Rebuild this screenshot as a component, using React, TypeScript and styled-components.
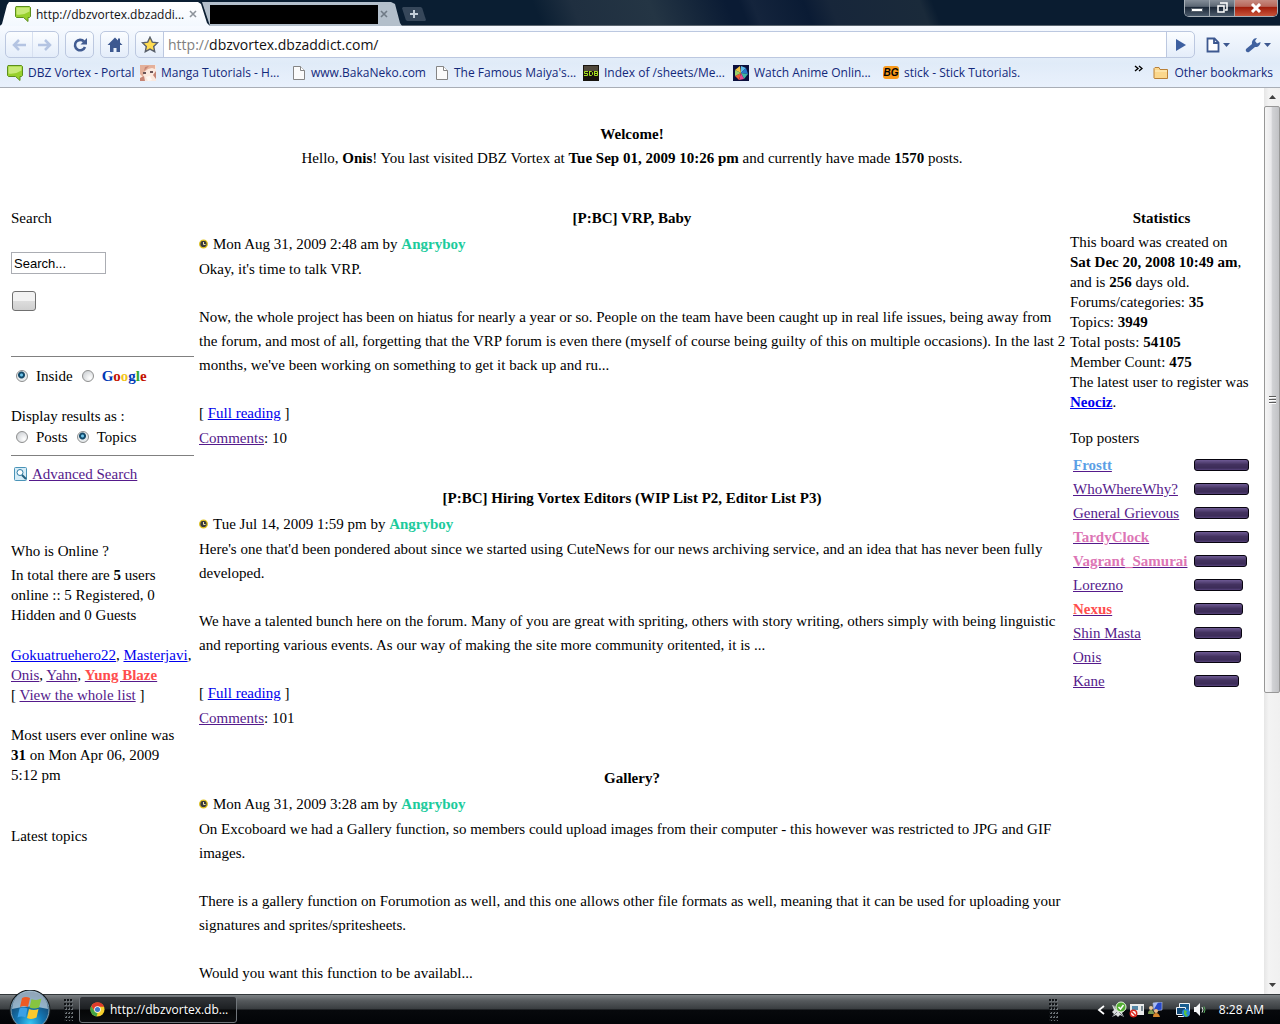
import React, { useState } from "react";
import styled, { createGlobalStyle, css } from "styled-components";

const serif = '"Liberation Serif", "Times New Roman", serif';
const ui = '"Open Sans", "Noto Sans", sans-serif';

const GlobalStyle = createGlobalStyle`
  * { box-sizing: border-box; }
  body { margin: 0; background: #fff; }
  button { padding: 0; border: 0; background: none; font: inherit; }
  svg { display: block; flex: none; }
`;

/* ---------- window frame ---------- */

const Desktop = styled.div`
  display: flex;
  flex-direction: column;
  height: 100vh;
  overflow: hidden;
  font-family: ${ui};
  font-size: 12px;
`;

const TitleBar = styled.header`
  display: flex;
  align-items: flex-end;
  height: 26px;
  flex: none;
  border-bottom: 1px solid #5b6670;
  background: linear-gradient(
    68deg,
    #0a1e32 42%,
    #1f2f40 45%,
    #243544 51%,
    #0a1b34 57%,
    #0a1b34 58%,
    #14243c 59%,
    #0a1b34 63%,
    #17263a 65%,
    #1a2a3a 72%,
    #0a1c30 73%
  );
`;

const Tab = styled.div<{ $active?: boolean }>`
  display: flex;
  align-items: center;
  gap: ${(p) => (p.$active ? 5 : 1)}px;
  width: ${(p) => (p.$active ? 210 : 200)}px;
  height: 24px;
  padding: ${(p) => (p.$active ? "0 16px 0 15px" : "0 13px 0 8px")};
  margin-bottom: -1px;
  margin-left: ${(p) => (p.$active ? 0 : -8)}px;
  color: #111;
  background: ${(p) => (p.$active ? "linear-gradient(#fff, #f3f8fe)" : "#b3bfcb")};
  clip-path: ${(p) =>
    p.$active
      ? "polygon(0 100%, 2px 92%, 7px 12%, 9px 0, 198px 0, 201px 8%, 207px 88%, 210px 100%)"
      : "polygon(8px 100%, 0 0, 189px 0, 193px 8%, 198px 88%, 200px 100%)"};
`;

const TabTitle = styled.span`
  flex: 1;
  white-space: nowrap;
`;

const Redacted = styled.span`
  flex: 1;
  height: 19px;
  background: #000;
`;

const TabClose = styled.button`
  display: grid;
  place-items: center;
  width: 10px;
  height: 12px;
`;

const NewTab = styled.button`
  display: grid;
  place-items: center;
  width: 24px;
  height: 14px;
  margin-bottom: 4px;
  background: #36475a;
  clip-path: polygon(0 8%, 5% 0, 78% 0, 84% 8%, 100% 92%, 96% 100%, 22% 100%, 16% 92%);
`;

const WindowButtons = styled.div`
  display: flex;
  align-self: flex-start;
  height: 17px;
  margin: 0 2px 0 auto;
  border: 1px solid #a8b0b8;
  border-top: 0;
  border-radius: 0 0 5px 5px;
  overflow: hidden;
`;

const WindowButton = styled.button<{ $close?: boolean }>`
  display: grid;
  place-items: center;
  width: ${(p) => (p.$close ? 42 : 25)}px;
  border-right: ${(p) => (p.$close ? 0 : 1)}px solid #a0a8b0;
  background: ${(p) =>
    p.$close
      ? "linear-gradient(#c68a80 0%, #b8675a 40%, #a01c0a 45%, #c8543a 100%)"
      : "linear-gradient(#848d98 0%, #5c6774 40%, #1a2636 45%, #4c5b6c 100%)"};
`;

const Toolbar = styled.div`
  display: flex;
  align-items: center;
  flex: none;
  height: 37px;
  padding: 0 5px;
  background: linear-gradient(#f7faff, #e0ebf8);
`;

const toolFrame = css`
  height: 27px;
  border: 1px solid #bcc8e0;
  border-radius: 5px;
  background: linear-gradient(#fbfdff, #e4edfa);
`;

const ToolGroup = styled.div`
  ${toolFrame}
  display: flex;
  width: 54px;
  margin-right: 6px;
`;

const HalfButton = styled.button`
  display: grid;
  place-items: center;
  flex: 1;
  & + & { border-left: 1px solid #d7e0f0; }
`;

const ToolButton = styled.button`
  ${toolFrame}
  display: grid;
  place-items: center;
  width: 29px;
  margin-right: 6px;
`;

const AddressBar = styled.form`
  ${toolFrame}
  display: flex;
  flex: 1;
  margin: 0 11px 0 0;
  overflow: hidden;
`;

const AddressButton = styled.button`
  display: grid;
  place-items: center;
  width: 27px;
  flex: none;
`;

const AddressField = styled.label`
  display: flex;
  flex: 1;
  align-items: center;
  padding: 0 4px;
  border: solid #bcc8e0;
  border-width: 0 1px;
  background: #fff;
  font-size: 14px;
  color: #808080;
`;

const AddressInput = styled.input`
  flex: 1;
  min-width: 0;
  padding: 0;
  border: 0;
  outline: 0;
  font: 14px ${ui};
  color: #111;
`;

const MenuButton = styled.button`
  display: flex;
  align-items: center;
  gap: 3px;
  width: 39px;
  & + & { width: 30px; }
`;

const Bookmarks = styled.nav`
  display: flex;
  align-items: center;
  flex: none;
  height: 25px;
  padding: 0 7px 5px;
  border-bottom: 1px solid #a9aeb6;
  background: linear-gradient(#e0ebf8, #e9f1fc);
`;

const BookmarkList = styled.div`
  display: grid;
  grid-template-columns: 133px 152px 143px 148px 150px 150px auto;
  margin-right: auto;
`;

const Bookmark = styled.a`
  display: flex;
  align-items: center;
  gap: 5px;
  color: #13297b;
  text-decoration: none;
  white-space: nowrap;
`;

const Overflow = styled.button`
  align-self: flex-start;
  margin: 2px 10px 0 0;
`;

/* ---------- page ---------- */

const Viewport = styled.div`
  display: flex;
  flex: 1;
  min-height: 0;
`;

const Page = styled.main`
  flex: 1;
  overflow: hidden;
  padding: 34px 11px 0;
  font: 15px/24px ${serif};
  color: #000;
`;

const Welcome = styled.section`
  margin-bottom: 36px;
  text-align: center;
`;

const Columns = styled.div`
  display: grid;
  grid-template-columns: 183px minmax(0, 1fr) 183px;
  gap: 5px;
`;

const Line = styled.p`
  margin: 0;
`;

const Heading = styled.h2<{ $plain?: boolean }>`
  margin: 0;
  font-size: 15px;
  font-weight: ${(p) => (p.$plain ? "normal" : "bold")};
  text-align: ${(p) => (p.$plain ? "left" : "center")};
`;

const Block = styled.p<{ $after?: number }>`
  margin: 0 0 ${(p) => p.$after ?? 20}px;
  line-height: 20px;
  white-space: nowrap;
  ${Heading} + & { margin-top: 2px; }
`;

const Link = styled.a<{ $seen?: boolean }>`
  color: ${(p) => (p.$seen ? "#551a8b" : "#0000ee")};
`;

const Ranked = styled.b<{ $color: string }>`
  color: ${(p) => p.$color};
`;

const SearchForm = styled.form`
  display: flex;
  flex-direction: column;
  align-items: flex-start;
  margin-bottom: 53px;
`;

const SearchInput = styled.input`
  width: 95px;
  height: 22px;
  margin: 22px 0 17px;
  padding: 0 2px;
  border: 1px solid #abadb3;
  font: 13px "Liberation Sans", Arial, sans-serif;
  color: #000;
`;

const SubmitButton = styled.button`
  width: 24px;
  height: 20px;
  margin: 0 1px 45px;
  border: 1px solid #707070;
  border-radius: 3px;
  background: linear-gradient(#f2f2f2 0 50%, #dddddd 50%, #cfcfcf);
`;

const Rule = styled.hr`
  width: 100%;
  margin: 0;
  border: 0;
  border-top: 1px solid #808080;
`;

const RadioRow = styled.div<{ $last?: boolean }>`
  display: flex;
  gap: 9px;
  margin: ${(p) => (p.$last ? "0 0 9px" : "7px 0 16px")};
  padding-left: 5px;
  line-height: ${(p) => (p.$last ? 18 : 24)}px;
`;

const RadioLabel = styled.label`
  display: flex;
  align-items: center;
  gap: 8px;
`;

const Radio = styled.input`
  appearance: none;
  width: 12px;
  height: 12px;
  margin: 0;
  border: 1px solid #8e8f8f;
  border-radius: 50%;
  background: radial-gradient(circle at 70% 70%, #fff, #c4c8cc);
  &:checked {
    background: radial-gradient(circle at 45% 40%, #6fc4ea 0 1px, #134a6b 2px 3px, #e6eaec 4px);
  }
`;

const Advanced = styled.a`
  display: flex;
  align-items: center;
  gap: 2px;
  padding: 6px 0 0 3px;
  color: #551a8b;
  white-space: pre;
`;

const Article = styled.article`
  margin-bottom: 36px;
`;

const Dateline = styled.div`
  display: flex;
  align-items: center;
  gap: 5px;
  margin: 2px 0 1px;
`;

const Body = styled.div`
  margin: 0 -3px 1px 0;
  p { margin: 0 0 24px; }
`;

const Posters = styled.table`
  width: 100%;
  margin-top: 3px;
  border-collapse: collapse;
  td { padding: 0; height: 24px; }
  td:first-child { padding-left: 3px; width: 124px; }
`;

const Bar = styled.div`
  height: 12px;
  border: 1px solid #08040f;
  border-radius: 3px;
  background: linear-gradient(#6e5a94, #43325f 45%, #3c2c58 80%, #57437c);
`;

/* ---------- scrollbar ---------- */

const Scrollbar = styled.div`
  display: flex;
  flex-direction: column;
  width: 16px;
  background: linear-gradient(90deg, #e6e6e6, #f3f3f3 30%, #f0f0f0);
`;

const ScrollArrow = styled.button`
  display: grid;
  place-items: center;
  height: 18px;
`;

const Thumb = styled.div`
  display: flex;
  flex: 588;
  flex-direction: column;
  align-items: center;
  justify-content: center;
  gap: 1px;
  border: 1px solid #979797;
  border-radius: 2px;
  background: linear-gradient(90deg, #f5f5f5, #e9e9eb 45%, #d2d3d6 50%, #c1c2c5);
`;

const Grip = styled.span`
  width: 7px;
  height: 2px;
  border-top: 1px solid #5a5a5a;
  background: #fff;
`;

const Track = styled.div`
  flex: 284;
`;

/* ---------- taskbar ---------- */

const Taskbar = styled.footer`
  display: flex;
  align-items: center;
  flex: none;
  height: 30px;
  padding: 0 16px 0 9px;
  border-top: 1px solid #33383b;
  background: linear-gradient(#7d8285 0, #55595c 20%, #393d40 48%, #07090c 52%, #020407);
  color: #fff;
`;

const StartButton = styled.button`
  align-self: flex-end;
  width: 42px;
  height: 34px;
  margin-right: 13px;
`;

const Dots = styled.span`
  width: 9px;
  height: 22px;
  background:
    radial-gradient(circle at 1px 1px, #101316 1px, transparent 1px) 0 0 / 3px 4px,
    radial-gradient(circle at 2px 2px, #6a7074 1px, transparent 1px) 0 0 / 3px 4px;
`;

const TaskButton = styled.button`
  display: flex;
  align-items: center;
  gap: 5px;
  width: 158px;
  height: 27px;
  margin: 0 auto 0 6px;
  padding-left: 10px;
  border: 1px solid #70757a;
  border-radius: 3px;
  background: linear-gradient(#33363a, #1c1f22 48%, #050607 52%, #0c0e10);
  color: #fff;
`;

const Tray = styled.div`
  display: flex;
  align-items: center;
  gap: 12px;
  margin-left: 39px;
`;

const TrayGroup = styled.div`
  display: flex;
  align-items: center;
  gap: 2px;
`;

const ShowHidden = styled.button`
  margin-right: 4px;
`;

/* ---------- icons ---------- */

const BubbleIcon = () => (
  <svg width="16" height="16" viewBox="0 0 16 16">
    <path d="M1 .5h13.500l1 1v9l-1 1h-1.500v4l-4.500-4H1.500l-1-1v-9z" fill="#98d02c" stroke="#5c8f1c" />
    <path d="M1.500 1.500h13v4q-6 4-13 3z" fill="#c8ea78" />
  </svg>
);

const PageIcon = () => (
  <svg width="14" height="16" viewBox="0 0 14 16">
    <path d="M1.500 1.500h7l4 4v9h-11z" fill="#fbfbfb" stroke="#858585" />
    <path d="M8.500 1.500v4h4" fill="#fff" stroke="#858585" />
  </svg>
);

const MangaIcon = () => (
  <svg width="16" height="16" viewBox="0 0 16 16">
    <path d="M0 0h16v16H0z" fill="#fbe9df" />
    <path d="M0 0h15v4L12 3 8 4 4 7 3 12 0 9z" fill="#e4b09a" />
    <path d="M3 7h3v2H3zM10 6h3v2h-3z" fill="#6b5558" />
    <path d="M5 2l4-1-5 5zM13 10l3-4v8zM0 13l4-2 1 5H0z" fill="#c58474" />
    <path d="M6 12l4-1 2 4-4 1z" fill="#fff8f3" />
  </svg>
);

const SdbIcon = () => (
  <svg width="16" height="16" viewBox="0 0 16 16">
    <path d="M0 0h16v16H0z" fill="#17140e" />
    <path d="M1 1h14v5H1z" fill="#4f483b" />
    <path d="M5 6.500H1.500v2H4.500v2H1M6.500 6v4.500h2l1-1v-2l-1-1h-2M11.500 6v4.500h3v-4h-3M11 8.500h3" fill="none" stroke="#a7e022" />
  </svg>
);

const PinwheelIcon = () => (
  <svg width="16" height="16" viewBox="0 0 16 16">
    <path d="M0 0h16v16H0z" fill="#0b0f3c" />
    <path d="M8 8L2 5l5-4z" fill="#f0c544" />
    <path d="M8 8V1l5 2z" fill="#59b8e8" />
    <path d="M8 8l5-5 2 6z" fill="#2879c9" />
    <path d="M8 8l7 1-4 5z" fill="#40b4a4" />
    <path d="M8 8l3 6-5 1z" fill="#e34890" />
    <path d="M8 8l-2 7-4-4z" fill="#ee5b35" />
    <path d="M8 8l-6 3V5z" fill="#9ed267" />
  </svg>
);

const BgBadge = styled.span`
  width: 16px;
  height: 13px;
  border-radius: 3px;
  background: #f89a1c;
  color: #000;
  font: italic bold 10px/13px "Liberation Sans", Arial, sans-serif;
  text-align: center;
`;

const FolderIcon = () => (
  <svg width="16" height="14" viewBox="0 0 16 14">
    <path d="M1 12V2.500L2 1.500h4l1 2h7.500V12.500H1.500z" fill="#fbd78c" stroke="#b98038" />
    <path d="M2 5h12" stroke="#fff0c4" />
  </svg>
);

const Arrow = ({ flip }: { flip?: boolean }) => (
  <svg width="16" height="14" viewBox="0 0 16 14">
    <path d={flip ? "M1 7h12M8 2l5 5-5 5" : "M15 7H3M8 2L3 7l5 5"} fill="none" stroke="#b4c4e2" strokeWidth="2.5" />
  </svg>
);

const ReloadIcon = () => (
  <svg width="16" height="16" viewBox="0 0 16 16">
    <path d="M12 4.500A5.200 5.200 0 1 0 13 10" fill="none" stroke="#425c92" strokeWidth="2.600" />
    <path d="M15 1v6.500H8.500z" fill="#425c92" />
  </svg>
);

const HomeIcon = () => (
  <svg width="16" height="16" viewBox="0 0 16 16">
    <path d="M8 0.500L0.500 8H3v7h3.500v-4h3v4H13V8h2.500L13 5.500V1.500h-2v2z" fill="#3d5890" />
  </svg>
);

const StarIcon = () => (
  <svg width="18" height="17" viewBox="0 0 18 17">
    <path d="M9 1.200l2.300 4.900 5.300.6-3.900 3.700 1 5.300L9 13.100l-4.700 2.600 1-5.300L1.400 6.700l5.300-.6z" fill="#ffdc51" stroke="#59606b" strokeWidth="1.400" />
  </svg>
);

const CaretIcon = () => (
  <svg width="7" height="4" viewBox="0 0 7 4">
    <path d="M0 0h7L3.500 4z" fill="#3d5890" />
  </svg>
);

const WrenchIcon = () => (
  <svg width="16" height="16" viewBox="0 0 16 16">
    <path d="M1 12l6-5c-.5-3 1.500-6 5-6l-2 3 2 2.500 3.500-1.500c0 3-2.500 5.500-5.500 5L4 15c-2 1-4-1-3-3z" fill="#41629f" />
  </svg>
);

const CrossIcon = ({ color = "#8d949b" }: { color?: string }) => (
  <svg width="8" height="8" viewBox="0 0 8 8">
    <path d="M1 1l6 6M7 1L1 7" stroke={color} strokeWidth="1.600" />
  </svg>
);

const ClockIcon = () => (
  <svg width="9" height="10" viewBox="0 0 9 10">
    <circle cx="4.500" cy="5" r="3.800" fill="#37393f" stroke="#e0c420" strokeWidth="1.300" />
    <path d="M4.500 3v2.500h2" fill="none" stroke="#f0e6a8" />
  </svg>
);

const MagnifierIcon = () => (
  <svg width="13" height="14" viewBox="0 0 13 14">
    <rect x=".5" y=".5" width="12" height="13" rx="1" fill="#d6ecf7" stroke="#4b94b8" />
    <circle cx="6" cy="5.500" r="3" fill="#fff" stroke="#2f7ca5" />
    <path d="M8 8l4 4" stroke="#24617f" strokeWidth="2" />
  </svg>
);

const StartOrb = () => (
  <svg width="42" height="34" viewBox="0 0 42 34">
    <defs>
      <radialGradient id="orb" cx=".5" cy=".85" r=".75">
        <stop offset="0" stopColor="#35c7f4" />
        <stop offset=".45" stopColor="#1477b4" />
        <stop offset="1" stopColor="#143a5e" />
      </radialGradient>
    </defs>
    <circle cx="21" cy="20" r="20.500" fill="#15191c" />
    <circle cx="21" cy="20" r="19" fill="url(#orb)" stroke="#7fa0b4" />
    <path d="M3 19a18 18 0 0 1 36 0q-18-5-36 0z" fill="#e4f0f8" opacity=".6" />
    <path d="M13 8q4-2 8 0l-2 9q-4-2-8 0z" fill="#ec5a24" />
    <path d="M22.500 9q5 2 10-.5l-2.500 9q-5 2-9.500 0z" fill="#87c440" />
    <path d="M10.500 18.500q4-2 8 0l-2 9q-4-2-8 0z" fill="#3ba0e6" />
    <path d="M20 19q5 2 9.500 0l-2 8.500q-5 2.500-9.500.5z" fill="#fcc92e" />
  </svg>
);

const ChromeIcon = () => (
  <svg width="15" height="15" viewBox="0 0 16 16">
    <circle cx="8" cy="8" r="7.500" fill="#f5cf2c" />
    <path d="M1.300 4.500A7.500 7.500 0 0 1 15 5H8L5 9.500z" fill="#de3b2b" />
    <path d="M1.300 4.500L5 10l3 2-1 3.500A7.500 7.500 0 0 1 1.300 4.500z" fill="#43a444" />
    <circle cx="8" cy="8" r="3.500" fill="#fff" />
    <circle cx="8" cy="8" r="2.700" fill="#3b79c9" />
  </svg>
);

const SafeIcon = () => (
  <svg width="16" height="17" viewBox="0 0 16 17">
    <path d="M1 4l3 1 2 3 3 1 4 1-2 2 2 4-4-2-2 2-2-2-4 2 2-3-2-2 2-2z" fill="#d9dcdc" />
    <path d="M2 4l5 6M2 15l4-4M12 15l-4-4" stroke="#7a8083" />
    <circle cx="10" cy="6" r="5" fill="#52ad32" stroke="#e5f5dd" />
    <path d="M7.500 6l2 2 3-4" fill="none" stroke="#fff" strokeWidth="1.500" />
  </svg>
);

const BlockedIcon = () => (
  <svg width="16" height="16" viewBox="0 0 16 16">
    <path d="M1 2h14v11H1z" fill="#e9eaea" />
    <path d="M3 4h6v4H3z" fill="#5589a8" />
    <path d="M12 4h2v5h-2z" fill="#7a8a92" />
    <circle cx="4.500" cy="11.500" r="3.200" fill="#fff" stroke="#d8281e" strokeWidth="1.500" />
    <path d="M2.500 9.500l4 4" stroke="#d8281e" strokeWidth="1.500" />
  </svg>
);

const PeopleIcon = () => (
  <svg width="16" height="16" viewBox="0 0 16 16">
    <path d="M6 1l9-1v8l-8 1z" fill="#2849c9" stroke="#c5cede" strokeWidth=".6" />
    <path d="M6 1l5-.5L7 7z" fill="#aabdf4" />
    <circle cx="4" cy="6" r="2" fill="#e8c79a" />
    <path d="M1 12q0-4 3-4t3 4z" fill="#7d9a51" />
    <circle cx="9" cy="9" r="2" fill="#f0bd85" />
    <path d="M6 15q0-4 3-4t4 4z" fill="#d7862c" />
  </svg>
);

const NetworkIcon = () => (
  <svg width="16" height="16" viewBox="0 0 16 16">
    <path d="M4.500 1.500h10v8h-10z" fill="#185d8f" stroke="#eef3f6" />
    <path d="M1.500 5.500h9v7h-9z" fill="#124a78" stroke="#eef3f6" />
    <path d="M3 14.500h6" stroke="#eef3f6" />
    <circle cx="11" cy="11" r="4" fill="#2787dc" />
    <path d="M9 8l3 1-1 3 2 1-2 2-2-3z" fill="#57c341" />
  </svg>
);

const SpeakerIcon = () => (
  <svg width="14" height="16" viewBox="0 0 14 16">
    <path d="M1 5h2l4-4v13l-4-4H1z" fill="#f3f5f6" />
    <path d="M9 5q2 3 0 5.500" fill="none" stroke="#e4eee4" />
    <path d="M11 4.500q2 3.500 0 6.500" fill="none" stroke="#55ae5a" />
  </svg>
);

/* ---------- data ---------- */

const bookmarks: [string, React.ReactNode][] = [
  ["DBZ Vortex - Portal", <BubbleIcon />],
  ["Manga Tutorials - H...", <MangaIcon />],
  ["www.BakaNeko.com", <PageIcon />],
  ["The Famous Maiya's...", <PageIcon />],
  ["Index of /sheets/Me...", <SdbIcon />],
  ["Watch Anime Onlin...", <PinwheelIcon />],
  ["stick - Stick Tutorials.", <BgBadge>BG</BgBadge>],
];

const articles = [
  {
    title: "[P:BC] VRP, Baby",
    date: "Mon Aug 31, 2009 2:48 am",
    comments: 10,
    body: [
      "Okay, it's time to talk VRP.",
      "Now, the whole project has been on hiatus for nearly a year or so. People on the team have been caught up in real life issues, being away from the forum, and most of all, forgetting that the VRP forum is even there (myself of course being guilty of this on multiple occasions). In the last 2 months, we've been working on something to get it back up and ru...",
    ],
  },
  {
    title: "[P:BC] Hiring Vortex Editors (WIP List P2, Editor List P3)",
    date: "Tue Jul 14, 2009 1:59 pm",
    comments: 101,
    body: [
      "Here's one that'd been pondered about since we started using CuteNews for our news archiving service, and an idea that has never been fully developed.",
      "We have a talented bunch here on the forum. Many of you are great with spriting, others with story writing, others simply with being linguistic and reporting various events. As our way of making the site more community oritented, it is ...",
    ],
  },
  {
    title: "Gallery?",
    date: "Mon Aug 31, 2009 3:28 am",
    comments: null,
    body: [
      "On Excoboard we had a Gallery function, so members could upload images from their computer - this however was restricted to JPG and GIF images.",
      "There is a gallery function on Forumotion as well, and this one allows other file formats as well, meaning that it can be used for uploading your signatures and sprites/spritesheets.",
      "Would you want this function to be availabl...",
    ],
  },
];

const posters: [string, number, string?][] = [
  ["Frostt", 55, "#5c9fe6"],
  ["WhoWhereWhy?", 55],
  ["General Grievous", 55],
  ["TardyClock", 55, "#dd75b5"],
  ["Vagrant_Samurai", 53, "#dd75b5"],
  ["Lorezno", 49],
  ["Nexus", 49, "#ff4d4d"],
  ["Shin Masta", 48],
  ["Onis", 47],
  ["Kane", 45],
];

const google: [string, string][] = [
  ["G", "#0039b6"],
  ["o", "#c41200"],
  ["o", "#f3c518"],
  ["g", "#0039b6"],
  ["l", "#30a72f"],
  ["e", "#c41200"],
];

/* ---------- sections ---------- */

function Browser() {
  return (
    <>
      <TitleBar>
        <Tab $active>
          <BubbleIcon />
          <TabTitle>http://dbzvortex.dbzaddi...</TabTitle>
          <TabClose aria-label="Close tab"><CrossIcon /></TabClose>
        </Tab>
        <Tab>
          <Redacted />
          <TabClose aria-label="Close tab"><CrossIcon color="#6f7a86" /></TabClose>
        </Tab>
        <NewTab aria-label="New tab">
          <svg width="8" height="8" viewBox="0 0 8 8"><path d="M4 0v8M0 4h8" stroke="#c4ced8" strokeWidth="2" /></svg>
        </NewTab>
        <WindowButtons>
          <WindowButton aria-label="Minimize">
            <svg width="12" height="12" viewBox="0 0 12 12"><path d="M.5 6.500h11v3H.5z" fill="#fff" stroke="#555f6a" /></svg>
          </WindowButton>
          <WindowButton aria-label="Restore">
            <svg width="12" height="12" viewBox="0 0 12 12">
              <path d="M4 1h7v7H9M2 4h6v6H2z" fill="none" stroke="#fff" strokeWidth="1.500" />
            </svg>
          </WindowButton>
          <WindowButton $close aria-label="Close">
            <svg width="12" height="10" viewBox="0 0 12 10"><path d="M2 1l8 8M10 1L2 9" stroke="#fff" strokeWidth="3" /></svg>
          </WindowButton>
        </WindowButtons>
      </TitleBar>
      <Toolbar>
        <ToolGroup>
          <HalfButton aria-label="Back"><Arrow /></HalfButton>
          <HalfButton aria-label="Forward"><Arrow flip /></HalfButton>
        </ToolGroup>
        <ToolButton aria-label="Reload"><ReloadIcon /></ToolButton>
        <ToolButton aria-label="Home"><HomeIcon /></ToolButton>
        <AddressBar onSubmit={(e) => e.preventDefault()}>
          <AddressButton type="button" aria-label="Bookmark this page"><StarIcon /></AddressButton>
          <AddressField>
            http://
            <AddressInput aria-label="Address" defaultValue="dbzvortex.dbzaddict.com/" />
          </AddressField>
          <AddressButton aria-label="Go">
            <svg width="10" height="12" viewBox="0 0 10 12"><path d="M0 0l10 6-10 6z" fill="#3d5fa0" /></svg>
          </AddressButton>
        </AddressBar>
        <MenuButton aria-label="Page menu">
          <svg width="14" height="16" viewBox="0 0 14 16">
            <path d="M1.500 1.500h7l4 4v9h-11zM8 1.500V6h4.500" fill="#fff" stroke="#3d5890" strokeWidth="1.800" />
          </svg>
          <CaretIcon />
        </MenuButton>
        <MenuButton aria-label="Tools menu"><WrenchIcon /><CaretIcon /></MenuButton>
      </Toolbar>
      <Bookmarks>
        <BookmarkList>
          {bookmarks.map(([name, icon]) => (
            <Bookmark href="#" key={name}>{icon}{name}</Bookmark>
          ))}
        </BookmarkList>
        <Overflow aria-label="More bookmarks">
          <svg width="9" height="7" viewBox="0 0 9 7"><path d="M1 1l3 2.500L1 6M5 1l3 2.500L5 6" fill="none" stroke="#000" strokeWidth="1.400" /></svg>
        </Overflow>
        <Bookmark href="#"><FolderIcon />Other bookmarks</Bookmark>
      </Bookmarks>
    </>
  );
}

function LeftColumn() {
  const [query, setQuery] = useState("Search...");
  return (
    <aside>
      <Heading $plain>Search</Heading>
      <SearchForm onSubmit={(e) => e.preventDefault()}>
        <SearchInput aria-label="Search" value={query} onChange={(e) => setQuery(e.target.value)} />
        <SubmitButton aria-label="Submit search" />
        <Rule />
        <RadioRow>
          <RadioLabel><Radio type="radio" name="where" defaultChecked />Inside</RadioLabel>
          <RadioLabel>
            <Radio type="radio" name="where" />
            <span>{google.map(([letter, color], i) => <Ranked key={i} $color={color}>{letter}</Ranked>)}</span>
          </RadioLabel>
        </RadioRow>
        <Line>Display results as :</Line>
        <RadioRow $last>
          <RadioLabel><Radio type="radio" name="kind" />Posts</RadioLabel>
          <RadioLabel><Radio type="radio" name="kind" defaultChecked />Topics</RadioLabel>
        </RadioRow>
        <Rule />
        <Advanced href="#"><MagnifierIcon />{" Advanced Search"}</Advanced>
      </SearchForm>
      <Heading $plain>Who is Online ?</Heading>
      <Block>
        In total there are <b>5</b> users<br />
        online :: 5 Registered, 0<br />
        Hidden and 0 Guests
      </Block>
      <Block>
        <Link href="#">Gokuatruehero22</Link>, <Link href="#">Masterjavi</Link>,<br />
        <Link $seen href="#">Onis</Link>, <Link $seen href="#">Yahn</Link>,{" "}
        <Link $seen href="#"><Ranked $color="#ff4d4d">Yung Blaze</Ranked></Link><br />
        [ <Link $seen href="#">View the whole list</Link> ]
      </Block>
      <Block $after={39}>
        Most users ever online was<br />
        <b>31</b> on Mon Apr 06, 2009<br />
        5:12 pm
      </Block>
      <Heading $plain>Latest topics</Heading>
    </aside>
  );
}

function News() {
  return (
    <section>
      {articles.map((a) => (
        <Article key={a.title}>
          <Heading>{a.title}</Heading>
          <Dateline>
            <ClockIcon />
            <span>{a.date} by <Ranked $color="#1ccb9c">Angryboy</Ranked></span>
          </Dateline>
          <Body>
            {a.body.map((text) => <p key={text}>{text}</p>)}
            {a.comments !== null && <Line as="div">[ <Link href="#">Full reading</Link> ]</Line>}
          </Body>
          {a.comments !== null && <Line><Link $seen href="#">Comments</Link>: {a.comments}</Line>}
        </Article>
      ))}
    </section>
  );
}

function RightColumn() {
  return (
    <aside>
      <Heading>Statistics</Heading>
      <Block $after={14}>
        This board was created on<br />
        <b>Sat Dec 20, 2008 10:49 am</b>,<br />
        and is <b>256</b> days old.<br />
        Forums/categories: <b>35</b><br />
        Topics: <b>3949</b><br />
        Total posts: <b>54105</b><br />
        Member Count: <b>475</b><br />
        The latest user to register was<br />
        <Link href="#"><b>Neociz</b></Link>.
      </Block>
      <Heading $plain>Top posters</Heading>
      <Posters>
        <tbody>
          {posters.map(([name, posts, color]) => (
            <tr key={name}>
              <td>
                <Link $seen href="#">{color ? <Ranked $color={color}>{name}</Ranked> : name}</Link>
              </td>
              <td><Bar style={{ width: posts }} /></td>
            </tr>
          ))}
        </tbody>
      </Posters>
    </aside>
  );
}

export default function App() {
  return (
    <Desktop>
      <GlobalStyle />
      <Browser />
      <Viewport>
        <Page>
          <Welcome>
            <Heading>Welcome!</Heading>
            <Line>
              Hello, <b>Onis</b>! You last visited DBZ Vortex at <b>Tue Sep 01, 2009 10:26 pm</b> and
              currently have made <b>1570</b> posts.
            </Line>
          </Welcome>
          <Columns>
            <LeftColumn />
            <News />
            <RightColumn />
          </Columns>
        </Page>
        <Scrollbar>
          <ScrollArrow aria-label="Scroll up">
            <svg width="7" height="4" viewBox="0 0 7 4"><path d="M3.500 0L7 4H0z" fill="#404040" /></svg>
          </ScrollArrow>
          <Thumb><Grip /><Grip /><Grip /></Thumb>
          <Track />
          <ScrollArrow aria-label="Scroll down">
            <svg width="7" height="4" viewBox="0 0 7 4"><path d="M0 0h7L3.500 4z" fill="#404040" /></svg>
          </ScrollArrow>
        </Scrollbar>
      </Viewport>
      <Taskbar>
        <StartButton aria-label="Start"><StartOrb /></StartButton>
        <Dots />
        <TaskButton><ChromeIcon />http://dbzvortex.db...</TaskButton>
        <Dots />
        <Tray>
          <TrayGroup>
            <ShowHidden aria-label="Show hidden icons">
              <svg width="8" height="10" viewBox="0 0 8 10"><path d="M7 1L2 5l5 4" fill="none" stroke="#fff" strokeWidth="1.800" /></svg>
            </ShowHidden>
            <SafeIcon />
            <BlockedIcon />
            <PeopleIcon />
          </TrayGroup>
          <TrayGroup>
            <NetworkIcon />
            <SpeakerIcon />
          </TrayGroup>
          <time>8:28 AM</time>
        </Tray>
      </Taskbar>
    </Desktop>
  );
}
